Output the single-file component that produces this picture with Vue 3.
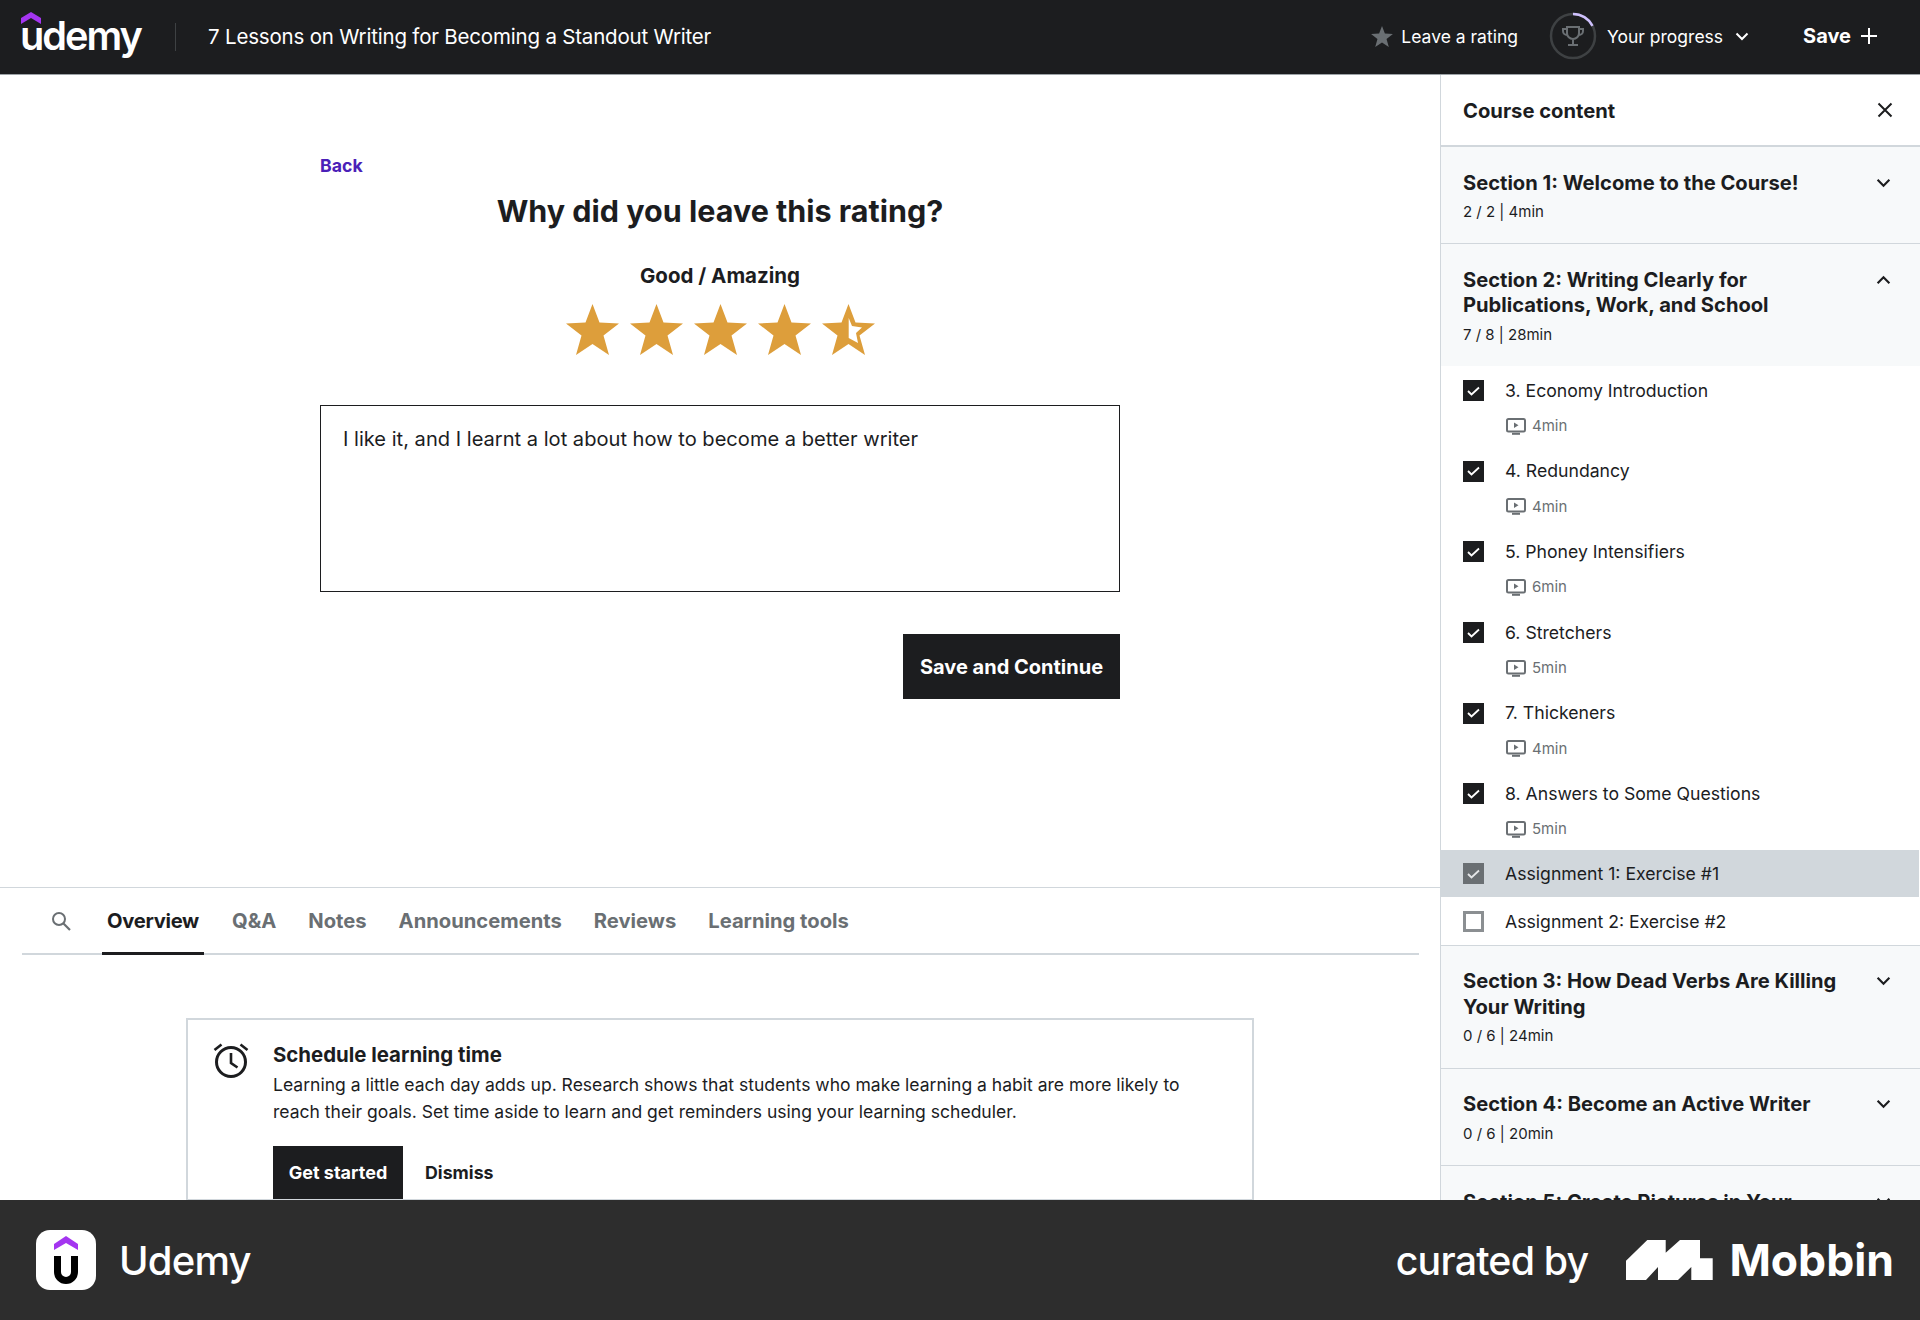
<script setup>
const starPts = '26.5,0 33.5,18.5 53,19.5 37.5,31.5 43,51 26.5,40 10,51 15.5,31.5 0,19.5 19.5,18.5'
const tabs = ['Overview', 'Q&A', 'Notes', 'Announcements', 'Reviews', 'Learning tools']
const lessons = [
  ['3. Economy Introduction', '4min'],
  ['4. Redundancy', '4min'],
  ['5. Phoney Intensifiers', '6min'],
  ['6. Stretchers', '5min'],
  ['7. Thickeners', '4min'],
  ['8. Answers to Some Questions', '5min']
]
</script>

<template>
  <div class="page">
    <header class="topbar">
      <div class="logo">
        <svg class="logo-arrow" width="20" height="12" viewBox="0 0 20 12"><path d="M10 0 20 6v6L10 6 0 12V6z" fill="#a435f0"/></svg>
        <span class="logo-word">udemy</span>
      </div>
      <span class="divider"></span>
      <span class="course-title">7 Lessons on Writing for Becoming a Standout Writer</span>
      <div class="top-right">
        <svg class="top-star" width="22" height="21" viewBox="0 0 53 51"><polygon :points="starPts" fill="#6a6f73"/></svg>
        <span class="top-link rating-link">Leave a rating</span>
        <svg class="ring" width="48" height="48" viewBox="0 0 48 48" fill="none">
          <circle cx="24" cy="24" r="22" stroke="#3e4143" stroke-width="2.5"/>
          <path d="M24 2a22 22 0 0 1 19.5 11.8" stroke="#cec0fc" stroke-width="2.5"/>
          <path d="M18 15h12v6a6 6 0 0 1-12 0zM18 17h-4v2a4 4 0 0 0 4 4M30 17h4v2a4 4 0 0 1-4 4M24 27v5M19 33h10" stroke="#6a6f73" stroke-width="2"/>
        </svg>
        <span class="top-link progress-link">Your progress</span>
        <svg class="top-chev" width="14" height="9" viewBox="0 0 14 9" fill="none"><path d="M1.5 1.5 7 7l5.500-5.500" stroke="#fff" stroke-width="2"/></svg>
        <span class="save">Save</span>
        <svg width="16" height="16" viewBox="0 0 16 16" fill="none"><path d="M8 0v16M0 8h16" stroke="#fff" stroke-width="2"/></svg>
      </div>
    </header>

    <div class="body">
      <main class="main">
        <section class="rating">
          <a class="back">Back</a>
          <h1 class="why">Why did you leave this rating?</h1>
          <div class="verdict">Good / Amazing</div>
          <div class="stars">
            <svg v-for="n in 4" :key="n" width="53" height="51" viewBox="0 0 53 51"><polygon :points="starPts" fill="#dd9e3b"/></svg>
            <svg width="53" height="51" viewBox="0 0 53 51">
              <polygon :points="starPts" fill="#dd9e3b"/>
              <polygon points="26.700,14 30,22 40,23.500 34,29 36,39 26.700,34" fill="#fff"/>
            </svg>
          </div>
          <div class="review">I like it, and I learnt a lot about how to become a better writer</div>
          <div class="actions"><button class="save-btn">Save and Continue</button></div>
        </section>

        <nav class="tabs">
          <div class="tabs-inner">
            <svg class="search" width="20" height="20" viewBox="0 0 20 20" fill="none"><circle cx="8" cy="8" r="6" stroke="#6a6f73" stroke-width="2"/><path d="m12.500 12.500 6.500 6.500" stroke="#6a6f73" stroke-width="2.200"/></svg>
            <span v-for="(t, i) in tabs" :key="t" class="tab" :class="{ active: i === 0 }">{{ t }}</span>
          </div>
        </nav>

        <section class="card">
          <svg class="clock" width="36" height="36" viewBox="0 0 36 36" fill="none">
            <circle cx="18" cy="20" r="14.500" stroke="#1c1d1f" stroke-width="3"/>
            <path d="M18 11v10l6.500 4.500M1.500 8l7-5.500M34.500 8l-7-5.500" stroke="#1c1d1f" stroke-width="2.600"/>
          </svg>
          <div class="card-body">
            <div class="card-title">Schedule learning time</div>
            <p class="card-text">Learning a little each day adds up. Research shows that students who make learning a habit are more likely to reach their goals. Set time aside to learn and get reminders using your learning scheduler.</p>
            <div class="card-actions">
              <button class="start">Get started</button>
              <span class="dismiss">Dismiss</span>
            </div>
          </div>
        </section>
      </main>

      <aside class="side">
        <div class="side-head">
          <span>Course content</span>
          <svg width="16" height="16" viewBox="0 0 16 16" fill="none"><path d="m1.500 1.500 13 13M14.500 1.500l-13 13" stroke="#1c1d1f" stroke-width="2"/></svg>
        </div>

        <div class="sec">
          <div class="sec-top">
            <div class="sec-title">Section 1: Welcome to the Course!</div>
            <svg class="chev" width="15" height="10" viewBox="0 0 14 9" fill="none"><path d="M1.500 1.500 7 7l5.500-5.500" stroke="#1c1d1f" stroke-width="2"/></svg>
          </div>
          <div class="sec-meta">2 / 2 | 4min</div>
        </div>

        <div class="sec open">
          <div class="sec-top">
            <div class="sec-title">Section 2: Writing Clearly for Publications, Work, and School</div>
            <svg class="chev" width="15" height="10" viewBox="0 0 14 9" fill="none"><path d="M1.500 7.500 7 2l5.500 5.500" stroke="#1c1d1f" stroke-width="2"/></svg>
          </div>
          <div class="sec-meta">7 / 8 | 28min</div>
        </div>

        <div class="items">
          <div v-for="l in lessons" :key="l[0]" class="item">
            <span class="box on"><svg width="13" height="10" viewBox="0 0 13 10" fill="none"><path d="m1 5 3.500 3.500L12 1.500" stroke="#fff" stroke-width="1.800"/></svg></span>
            <div>
              <div class="item-name">{{ l[0] }}</div>
              <div class="item-meta">
                <svg width="20" height="17" viewBox="0 0 20 17" fill="none"><rect x="1" y="1" width="18" height="12.500" rx="1.500" stroke="#6a6f73" stroke-width="2"/><path d="M8 4.500v5.500l4.500-2.750z" fill="#6a6f73"/><path d="M6 15.800h8" stroke="#6a6f73" stroke-width="2"/></svg>
                <span>{{ l[1] }}</span>
              </div>
            </div>
          </div>
          <div class="assign current">
            <span class="box on dim"><svg width="13" height="10" viewBox="0 0 13 10" fill="none"><path d="m1 5 3.500 3.500L12 1.500" stroke="#e4e6e8" stroke-width="1.800"/></svg></span>
            <span class="item-name">Assignment 1: Exercise #1</span>
          </div>
          <div class="assign">
            <span class="box"></span>
            <span class="item-name">Assignment 2: Exercise #2</span>
          </div>
        </div>

        <div class="sec">
          <div class="sec-top">
            <div class="sec-title">Section 3: How Dead Verbs Are Killing Your Writing</div>
            <svg class="chev" width="15" height="10" viewBox="0 0 14 9" fill="none"><path d="M1.500 1.500 7 7l5.500-5.500" stroke="#1c1d1f" stroke-width="2"/></svg>
          </div>
          <div class="sec-meta">0 / 6 | 24min</div>
        </div>

        <div class="sec">
          <div class="sec-top">
            <div class="sec-title">Section 4: Become an Active Writer</div>
            <svg class="chev" width="15" height="10" viewBox="0 0 14 9" fill="none"><path d="M1.500 1.500 7 7l5.500-5.500" stroke="#1c1d1f" stroke-width="2"/></svg>
          </div>
          <div class="sec-meta">0 / 6 | 20min</div>
        </div>

        <div class="sec">
          <div class="sec-top">
            <div class="sec-title">Section 5: Create Pictures in Your Writing</div>
            <svg class="chev" width="15" height="10" viewBox="0 0 14 9" fill="none"><path d="M1.500 1.500 7 7l5.500-5.500" stroke="#1c1d1f" stroke-width="2"/></svg>
          </div>
        </div>
      </aside>
    </div>

    <footer class="foot">
      <div class="foot-left">
        <span class="app-icon">
          <svg width="24" height="48" viewBox="0 0 24 48" fill="none">
            <path d="M12 0 24 8v6L12 7 0 14V8z" fill="#a435f0"/>
            <path d="M3.500 20v16a8.500 8.500 0 0 0 17 0V20" stroke="#000" stroke-width="7"/>
          </svg>
        </span>
        <span class="app-name">Udemy</span>
      </div>
      <div class="foot-right">
        <span class="curated">curated by</span>
        <svg class="mob-mark" width="87" height="40" viewBox="0 0 87 40"><path d="M0 20.700 21.300 0h18.400v12.700L54 0h20v18.300h12.700V40H65.300V27L52 40H32V27L20 40H0z" fill="#fff"/></svg>
        <span class="mobbin">Mobbin</span>
      </div>
    </footer>
  </div>
</template>

<style>
html, body { margin: 0; background: #fff; }
</style>

<style scoped>
.page { width: 1920px; height: 1320px; display: flex; flex-direction: column; overflow: hidden; font-family: Inter, "Liberation Sans", sans-serif; color: #1c1d1f; }

.topbar { flex: none; height: 74px; box-sizing: content-box; border-bottom: 1px solid #9da3a7; background: #1c1d1f; color: #fff; display: flex; align-items: center; padding-left: 21px; padding-right: 43px; }
.logo { width: 122px; height: 46px; position: relative; margin-top: 2px; }
.logo-arrow { position: absolute; left: 0; top: -3px; }
.logo-word { position: absolute; left: -1px; top: -3px; font-size: 39.700px; line-height: 48px; font-weight: 600; letter-spacing: -2px; }
.divider { width: 1px; height: 28px; background: #3e4143; margin: 0 32px; }
.course-title { font-size: 20.500px; letter-spacing: -0.190px; position: relative; top: -1px; }
.top-right { margin-left: auto; display: flex; align-items: center; position: relative; top: -1px; }
.top-star { margin-right: 8px; }
.top-link { font-size: 17.500px; }
.rating-link { margin-right: 31px; }
.progress-link { margin: 0 12px 0 10px; }
.top-chev { margin-right: 54px; }
.save { font-size: 20px; font-weight: 700; margin-right: 10px; }

.body { flex: 1; min-height: 0; display: flex; }
.main { flex: none; width: 1440px; overflow: hidden; }
.rating { height: 812px; box-sizing: border-box; width: 800px; margin: 0 auto; padding-top: 81px; }
.back { display: block; color: #4a20b8; font-size: 17.700px; font-weight: 700; line-height: 20px; }
.why { margin: 15px 0 0; font-size: 30.500px; line-height: 40px; font-weight: 700; text-align: center; }
.verdict { margin-top: 33px; font-size: 20.500px; line-height: 24px; font-weight: 700; text-align: center; }
.stars { margin-top: 16px; height: 51px; display: flex; justify-content: center; gap: 11px; }
.review { margin-top: 50px; height: 187px; box-sizing: border-box; border: 1px solid #1c1d1f; padding: 19px 22px; font-size: 20.100px; line-height: 29px; }
.actions { margin-top: 42px; display: flex; justify-content: flex-end; }
.save-btn { width: 217px; height: 65px; background: #1c1d1f; color: #fff; border: 0; font: 700 20px Inter, "Liberation Sans", sans-serif; }

.tabs { border-top: 1px solid #d1d7dc; padding: 0 21px 0 22px; }
.tabs-inner { height: 65px; border-bottom: 2px solid #d1d7dc; display: flex; align-items: stretch; position: relative; }
.search { align-self: center; margin: 0 31px 0 29px; }
.tab { display: flex; align-items: center; padding: 0 5px; margin-right: 22px; font-size: 20.200px; font-weight: 700; color: #6a6f73; margin-bottom: -2px; border-bottom: 3px solid transparent; box-sizing: border-box; }
.tab.active { color: #1c1d1f; border-bottom-color: #1c1d1f; letter-spacing: -0.300px; margin-right: 23px; }

.card { margin: 63px 0 0 186px; width: 1068px; box-sizing: border-box; border: 2px solid #d1d7dc; padding: 22px 24px 0 25px; display: flex; }
.clock { flex: none; margin-right: 24px; }
.card-body { width: 930px; }
.card-title { font-size: 20.400px; line-height: 25px; font-weight: 700; }
.card-text { margin: 4px 0 0; font-size: 17.550px; line-height: 27px; }
.card-actions { margin-top: 21px; display: flex; align-items: center; }
.start { width: 130px; height: 53px; background: #1c1d1f; color: #fff; border: 0; font: 700 18px Inter, "Liberation Sans", sans-serif; }
.dismiss { margin-left: 22px; font-size: 17.800px; font-weight: 700; }

.side { flex: none; width: 480px; box-sizing: border-box; border-left: 1px solid #d1d7dc; overflow: hidden; }
.side-head { height: 72px; box-sizing: border-box; border-bottom: 2px solid #d1d7dc; padding: 0 27px 0 22px; display: flex; justify-content: space-between; align-items: center; font-size: 20.200px; font-weight: 700; }
.sec { background: #f7f9fa; border-bottom: 1px solid #d1d7dc; padding: 22.500px 29px 21.500px 22px; }
.sec.open { border-bottom: 0; }
.sec-top { display: flex; justify-content: space-between; align-items: flex-start; }
.sec-title { width: 380px; font-size: 20.150px; line-height: 25.400px; font-weight: 700; }
.chev { margin-top: 8px; }
.sec-meta { margin-top: 6px; font-size: 15px; line-height: 21px; }
.items { background: #fff; border-bottom: 1px solid #d1d7dc; }
.item { height: 80.600px; box-sizing: border-box; padding: 11.500px 22px 0; display: flex; gap: 21px; }
.box { flex: none; width: 21px; height: 21px; box-sizing: border-box; margin-top: 2.500px; border: 3px solid #8b8f92; display: flex; align-items: center; justify-content: center; }
.box.on { background: #1c1d1f; border: 0; }
.box.dim { background: #6a6f73; }
.item-name { font-size: 17.650px; line-height: 25px; }
.item-meta { margin-top: 12.500px; margin-left: 1px; display: flex; align-items: center; gap: 6px; font-size: 15px; line-height: 22px; color: #6a6f73; }
.assign { height: 47.600px; box-sizing: border-box; padding: 0 22px; display: flex; gap: 21px; align-items: center; }
.assign .box { margin-top: 0; }
.assign.current { background: #d1d7dc; margin-right: 1px; }

.foot { flex: none; height: 120px; background: #2d2d2d; color: #fff; display: flex; justify-content: space-between; align-items: center; padding: 0 26px 0 36px; }
.foot-left, .foot-right { display: flex; align-items: center; }
.app-icon { width: 60px; height: 60px; border-radius: 14px; background: #fff; display: flex; align-items: center; justify-content: center; }
.app-name { margin-left: 23px; font-size: 40px; font-weight: 500; letter-spacing: -0.800px; }
.curated { font-size: 39.300px; font-weight: 500; letter-spacing: -0.800px; margin-right: 38px; }
.mob-mark { margin-right: 16px; }
.mobbin { font-size: 44.500px; font-weight: 700; }
</style>
